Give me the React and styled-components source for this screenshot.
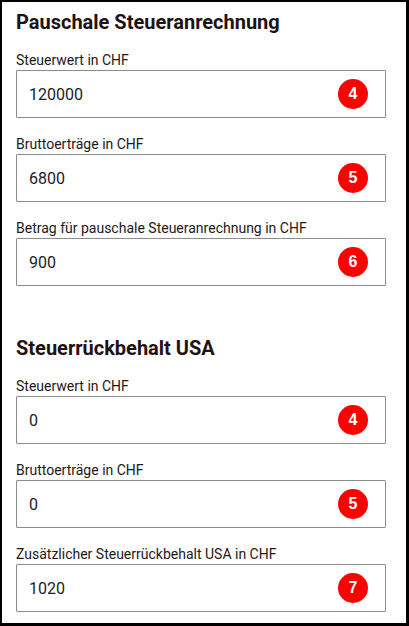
import React from 'react';
import styled, { createGlobalStyle } from 'styled-components';

const GlobalStyle = createGlobalStyle`
  * {
    margin: 0;
    padding: 0;
    box-sizing: border-box;
  }
  body {
    background: #ffffff;
    font-family: Roboto, "Liberation Sans", sans-serif;
  }
`;

const Frame = styled.div`
  width: 409px;
  height: 626px;
  overflow: hidden;
  border-style: solid;
  border-color: #000;
  border-width: 2px 3px 3px 2px;
  padding: 8px 20px 0 14px;
  background: #fff;
`;

const Section = styled.section`
  margin-top: ${(p) => (p.first ? '0' : '50px')};
`;

const Heading = styled.h2`
  font-size: 20px;
  line-height: 24px;
  font-weight: 700;
  color: #1f1212;
`;

const Field = styled.div`
  margin-top: 18px;
`;

const Label = styled.label`
  display: block;
  font-size: 14px;
  line-height: 17px;
  margin-bottom: 1px;
  color: #241818;
`;

const Box = styled.div`
  display: flex;
  align-items: center;
  height: 48px;
  border: 1px solid #8c8c8c;
  border-radius: 1px;
`;

const Value = styled.input`
  flex: 1;
  min-width: 0;
  border: none;
  outline: none;
  background: transparent;
  padding-left: 12px;
  font-family: Roboto, "Liberation Sans", sans-serif;
  font-size: 16px;
  color: #1c1c28;
`;

const Badge = styled.span`
  flex: none;
  width: 30px;
  height: 30px;
  margin-right: 17px;
  border-radius: 50%;
  background: #ff0000;
  color: #fff;
  display: flex;
  align-items: center;
  justify-content: center;
  font-family: "Liberation Sans", Arial, sans-serif;
  font-weight: 700;
  font-size: 16px;
`;

const sections = [
  {
    title: 'Pauschale Steueranrechnung',
    fields: [
      { label: 'Steuerwert in CHF', value: '120000', badge: 4 },
      { label: 'Bruttoerträge in CHF', value: '6800', badge: 5 },
      { label: 'Betrag für pauschale Steueranrechnung in CHF', value: '900', badge: 6 },
    ],
  },
  {
    title: 'Steuerrückbehalt USA',
    fields: [
      { label: 'Steuerwert in CHF', value: '0', badge: 4 },
      { label: 'Bruttoerträge in CHF', value: '0', badge: 5 },
      { label: 'Zusätzlicher Steuerrückbehalt USA in CHF', value: '1020', badge: 7 },
    ],
  },
];

export default function App() {
  return (
    <>
      <GlobalStyle />
      <Frame>
        {sections.map((s, i) => (
          <Section key={s.title} first={i === 0}>
            <Heading>{s.title}</Heading>
            {s.fields.map((f) => (
              <Field key={f.label}>
                <Label>{f.label}</Label>
                <Box>
                  <Value type="text" defaultValue={f.value} readOnly />
                  <Badge>{f.badge}</Badge>
                </Box>
              </Field>
            ))}
          </Section>
        ))}
      </Frame>
    </>
  );
}
